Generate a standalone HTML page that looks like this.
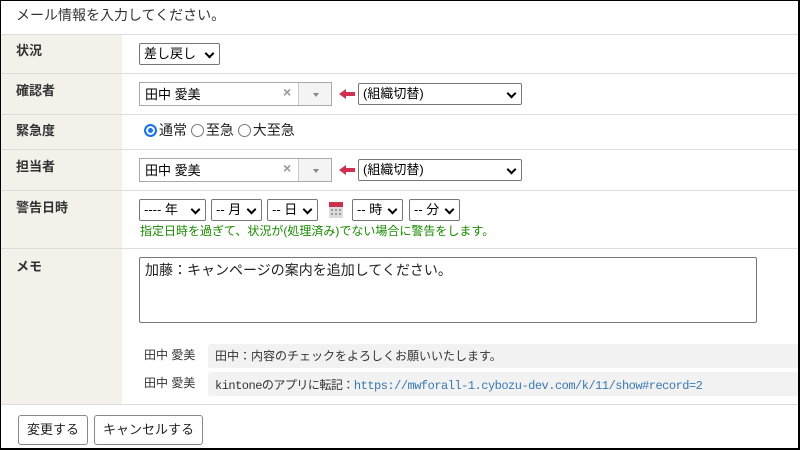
<!DOCTYPE html>
<html><head><meta charset="utf-8"><style>
*{box-sizing:border-box;margin:0;padding:0}
body{width:800px;height:450px;overflow:hidden;background:#fff;font-family:"Liberation Sans","Noto Sans CJK JP",sans-serif;font-size:13px;color:#333;position:relative}
.frame{position:absolute;left:0;top:0;width:800px;height:450px;border:1px solid #000;border-right:2px solid #000;border-bottom:2px solid #000;z-index:10;pointer-events:none}
.a{position:absolute}
.lab{position:absolute;left:1px;width:121px;background:#f3f1ea}
.hl{position:absolute;left:0;width:800px;height:1px;background:#ddd}
.lt{position:absolute;left:16px;font-weight:bold;font-size:13px;color:#333}
.sel{position:absolute;height:22px;border:1px solid #767676;border-radius:2px;background:#fff;font-size:13px;line-height:19px;padding-left:4px;color:#000}
.sel:after{content:"";position:absolute;right:6px;top:6px;width:5px;height:5px;border-right:2px solid #000;border-bottom:2px solid #000;transform:rotate(45deg)}
.combo{position:absolute;left:139px;width:193px;height:24px;border:1px solid #aaa;background:#fff}
.combo span{position:absolute;left:5px;top:1px;color:#000}
.combo .x{position:absolute;left:143px;top:1px;color:#999;font-size:14px}
.combo .dd{position:absolute;left:158px;top:0;width:33px;height:22px;border-left:1px solid #ccc;background:#f4f4f4}
.combo .dd:after{content:"";position:absolute;left:14px;top:10px;border:3px solid transparent;border-top:4px solid #888}
.arrow{position:absolute;left:339px;width:16px;height:10px}
.btn{position:absolute;top:415px;height:30px;border:1px solid #888;border-radius:3px;background:#fff;font-size:13px;line-height:27px;text-align:center;color:#222}
.rad{display:inline-block;width:13px;height:13px;border:1px solid #777;border-radius:50%;vertical-align:-2px;margin-right:2px;background:#fff}
.rad.on{border:2px solid #1a73e8;box-shadow:inset 0 0 0 2px #fff;background:#1a73e8}
</style></head><body>
<div class="frame"></div>
<div class="a" style="left:16px;top:5px;font-size:14px;color:#333">メール情報を入力してください。</div>
<div class="lab" style="top:35px;height:369px"></div>
<div class="hl" style="top:34px"></div>
<div class="hl" style="top:73px"></div>
<div class="hl" style="top:114px"></div>
<div class="hl" style="top:149px"></div>
<div class="hl" style="top:190px"></div>
<div class="hl" style="top:248px"></div>
<div class="hl" style="top:404px"></div>

<div class="lt" style="top:40px">状況</div>
<div class="sel" style="left:139px;top:43px;width:81px">差し戻し</div>

<div class="lt" style="top:80px">確認者</div>
<div class="combo" style="top:82px"><span>田中 愛美</span><b class="x">×</b><div class="dd"></div></div>
<svg class="arrow" style="top:89px" viewBox="0 0 16 10"><path d="M0 5L7 0V3H16V7H7V10Z" fill="#d0304f"/></svg>
<div class="sel" style="left:358px;top:83px;width:164px">(組織切替)</div>

<div class="lt" style="top:120px">緊急度</div>
<div class="a" style="left:144px;top:120px;font-size:14px;color:#222"><span class="rad on"></span>通常 <span class="rad"></span>至急 <span class="rad"></span>大至急</div>

<div class="lt" style="top:156px">担当者</div>
<div class="combo" style="top:158px"><span>田中 愛美</span><b class="x">×</b><div class="dd"></div></div>
<svg class="arrow" style="top:165px" viewBox="0 0 16 10"><path d="M0 5L7 0V3H16V7H7V10Z" fill="#d0304f"/></svg>
<div class="sel" style="left:358px;top:159px;width:164px">(組織切替)</div>

<div class="lt" style="top:197px">警告日時</div>
<div class="sel" style="left:139px;top:199px;width:67px">---- 年</div>
<div class="sel" style="left:211px;top:199px;width:51px">-- 月</div>
<div class="sel" style="left:267px;top:199px;width:51px">-- 日</div>
<svg class="a" style="left:329px;top:200px" width="14" height="18" viewBox="0 0 14 18"><rect x="0" y="2" width="14" height="16" fill="#ddd"/><rect x="0" y="2" width="14" height="5" fill="#c8324a"/><g fill="#999"><rect x="2" y="9" width="2" height="2"/><rect x="6" y="9" width="2" height="2"/><rect x="10" y="9" width="2" height="2"/><rect x="2" y="13" width="2" height="2"/><rect x="6" y="13" width="2" height="2"/><rect x="10" y="13" width="2" height="2"/></g></svg>
<div class="sel" style="left:352px;top:199px;width:51px">-- 時</div>
<div class="sel" style="left:409px;top:199px;width:51px">-- 分</div>
<div class="a" style="left:140px;top:222px;font-size:12px;color:#198a00">指定日時を過ぎて、状況が(処理済み)でない場合に警告をします。</div>

<div class="lt" style="top:256px">メモ</div>
<div class="a" style="left:139px;top:257px;width:618px;height:66px;border:1px solid #767676;border-radius:2px;padding:2px 5px;font-size:14px;color:#222">加藤：キャンページの案内を追加してください。</div>
<div class="a" style="left:144px;top:346px;font-size:12px;color:#333">田中 愛美</div>
<div class="a" style="left:208px;top:344px;width:592px;height:24px;background:#f2f2f2;border-radius:3px 0 0 3px;padding:3px 7px;font-size:12px;color:#333">田中：内容のチェックをよろしくお願いいたします。</div>
<div class="a" style="left:144px;top:374px;font-size:12px;color:#333">田中 愛美</div>
<div class="a" style="left:208px;top:372px;width:592px;height:24px;background:#f2f2f2;border-radius:3px 0 0 3px;padding:4px 7px;font-size:12px;color:#333;font-family:'Liberation Mono','Noto Sans CJK JP',monospace;letter-spacing:-0.5px">kintoneのアプリに転記：<span style="color:#3a78b0">https://mwforall-1.cybozu-dev.com/k/11/show#record=2</span></div>

<div class="btn" style="left:18px;width:70px">変更する</div>
<div class="btn" style="left:94px;width:109px">キャンセルする</div>
</body></html>
